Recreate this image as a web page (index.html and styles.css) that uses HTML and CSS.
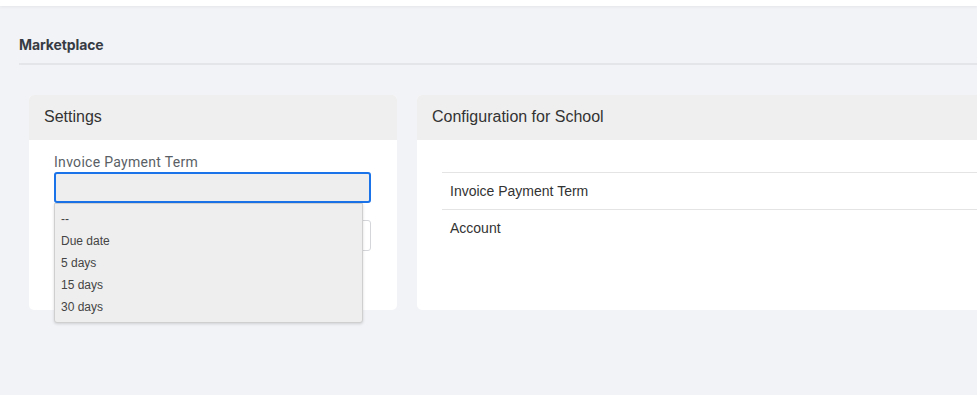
FILE: index.html
```html
<!DOCTYPE html>
<html lang="en">
<head>
    <meta charset="UTF-8">
    <meta name="viewport" content="width=device-width, initial-scale=1.0">
    <title>Marketplace</title>
    <link rel="stylesheet" href="styles.css">
</head>
<body>
    <div class="topbar"></div>

    <div class="page">
        <div class="page-title">
            <h1>Marketplace</h1>
        </div>

        <div class="cards">
            <div class="card card-settings">
                <div class="card-header">Settings</div>
                <div class="card-body">
                    <div class="field">
                        <label class="field-label">Invoice Payment Term</label>
                        <div class="select-box focused"></div>
                        <ul class="select-menu">
                            <li>--</li>
                            <li>Due date</li>
                            <li>5 days</li>
                            <li>15 days</li>
                            <li>30 days</li>
                        </ul>
                    </div>
                    <div class="field">
                        <div class="select-box"></div>
                    </div>
                </div>
            </div>

            <div class="card card-config">
                <div class="card-header">Configuration for School</div>
                <div class="card-body">
                    <div class="config-list">
                        <div class="config-row">Invoice Payment Term</div>
                        <div class="config-row">Account</div>
                    </div>
                </div>
            </div>
        </div>
    </div>
</body>
</html>
```

FILE: styles.css
```css
* {
    margin: 0;
    padding: 0;
    box-sizing: border-box;
}

body {
    font-family: "Liberation Sans", Arial, sans-serif;
    background: #f2f3f7;
    color: #333;
    overflow: hidden;
    height: 100vh;
}

.topbar {
    height: 6px;
    background: #fff;
    box-shadow: 0 1px 3px rgba(0, 0, 0, 0.06);
}

.page {
    padding: 0 0 0 19px;
}

.page-title {
    padding-top: 30px;
    padding-bottom: 10px;
    border-bottom: 2px solid #e3e5e9;
}

.page-title h1 {
    font-family: Inter, sans-serif;
    font-size: 14px;
    font-weight: 700;
    color: #373c44;
    line-height: 17px;
    letter-spacing: -0.1px;
}

.cards {
    display: flex;
    gap: 20px;
    margin-top: 30px;
    padding-left: 10px;
}

.card {
    background: #fff;
    border-radius: 5px;
    height: 215px;
    flex-shrink: 0;
}

.card-settings {
    width: 368px;
}

.card-config {
    width: 600px;
}

.card-header {
    height: 45px;
    background: #efefef;
    border-radius: 5px 5px 0 0;
    padding: 0 15px;
    font-size: 16px;
    line-height: 43px;
    color: #333;
}

.card-settings .card-body {
    padding: 14px 26px 0 25px;
}

.field {
    position: relative;
    margin-bottom: 17px;
}

.field-label {
    display: block;
    font-family: Roboto, sans-serif;
    font-size: 14px;
    font-weight: 400;
    color: #5a5f66;
    line-height: 17px;
    letter-spacing: 0.3px;
    margin-bottom: 1px;
}

.select-box {
    height: 31px;
    border: 1px solid #d4d6da;
    border-radius: 3px;
    background: #fff;
}

.select-box.focused {
    border: 2px solid #1a73e8;
    background: #eeeeee;
}

.select-menu {
    position: absolute;
    left: 0;
    top: 49px;
    width: 309px;
    list-style: none;
    background: #eeeeee;
    border: 1px solid #cfcfcf;
    border-radius: 0 0 3px 3px;
    box-shadow: 0 1px 3px rgba(0, 0, 0, 0.15);
    padding: 4px 0 4px;
    z-index: 2;
}

.select-menu li {
    font-size: 12px;
    line-height: 22px;
    color: #444;
    padding-left: 6px;
}

.card-config .card-body {
    padding: 32px 0 0 25px;
}

.config-row {
    border-top: 1px solid #e4e4e4;
    height: 37px;
    line-height: 36px;
    padding-left: 8px;
    font-size: 14px;
    color: #333;
}
```
